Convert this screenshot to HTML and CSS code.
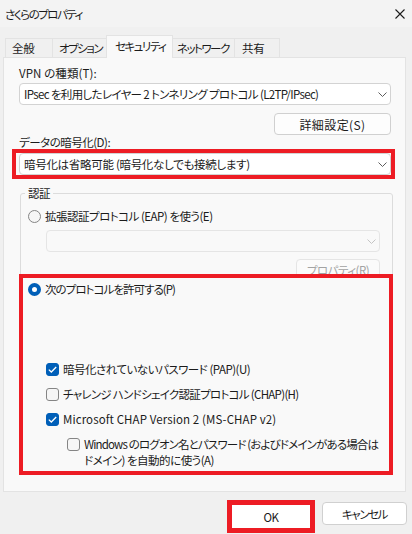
FILE: index.html
```html
<!DOCTYPE html>
<html lang="ja">
<head>
    <meta charset="UTF-8">
    <meta name="viewport" content="width=device-width, initial-scale=1.0">
    <title>さくらのプロパティ</title>
    <link rel="stylesheet" href="styles.css">
</head>
<body>

    <div class="titlebar">
        <span class="title">さくらのプロパティ</span>
        <svg class="close" width="10" height="10" viewBox="0 0 10 10">
            <path d="M0.5 0.5 L9.5 9.5 M9.5 0.5 L0.5 9.5" stroke="#1b1b1b" stroke-width="1.1" fill="none"/>
        </svg>
    </div>

    <div class="tabs">
        <div class="tab tab-general">全般</div>
        <div class="tab tab-options">オプション</div>
        <div class="tab tab-security active">セキュリティ</div>
        <div class="tab tab-network">ネットワーク</div>
        <div class="tab tab-share">共有</div>
    </div>

    <div class="panel">
        <div class="label label-vpn">VPN の種類(T):</div>
        <div class="combo">
            <span class="combo-type">IPsec を利用したレイヤー 2 トンネリング プロトコル (L2TP/IPsec)</span>
            <svg class="chev" width="9" height="5" viewBox="0 0 9 5"><polyline points="0.5,0.5 4.5,4.5 8.5,0.5" stroke="#5d5d5d" fill="none"/></svg>
        </div>
        <div class="btn-row">
            <div class="btn btn-advanced">詳細設定(S)</div>
        </div>

        <div class="label label-enc">データの暗号化(D):</div>
        <div class="mark mark-enc">
            <div class="combo">
                <span class="combo-enc">暗号化は省略可能 (暗号化なしでも接続します)</span>
                <svg class="chev" width="9" height="5" viewBox="0 0 9 5"><polyline points="0.5,0.5 4.5,4.5 8.5,0.5" stroke="#5d5d5d" fill="none"/></svg>
            </div>
        </div>

        <div class="group">
            <div class="group-title">認証</div>
            <div class="option option-eap"><span class="radio"></span>拡張認証プロトコル (EAP) を使う(E)</div>
            <div class="combo combo-disabled">
                <span></span>
                <svg class="chev" width="9" height="5" viewBox="0 0 9 5"><polyline points="0.5,0.5 4.5,4.5 8.5,0.5" stroke="#c4c4c4" fill="none"/></svg>
            </div>
            <div class="btn-row">
                <div class="btn btn-disabled">プロパティ(R)</div>
            </div>

            <div class="mark mark-auth">
                <div class="option option-allow"><span class="radio radio-on"></span>次のプロトコルを許可する(P)</div>
                <div class="checks">
                    <div class="option">
                        <span class="check check-on"><svg width="9" height="7" viewBox="0 0 9 7"><polyline points="0.8,3.6 3.3,6 8.2,1" stroke="#fff" stroke-width="1.3" fill="none"/></svg></span>
                        暗号化されていないパスワード (PAP)(U)
                    </div>
                    <div class="option option-chap">
                        <span class="check"></span>
                        チャレンジ ハンドシェイク認証プロトコル (CHAP)(H)
                    </div>
                    <div class="option option-latin">
                        <span class="check check-on"><svg width="9" height="7" viewBox="0 0 9 7"><polyline points="0.8,3.6 3.3,6 8.2,1" stroke="#fff" stroke-width="1.3" fill="none"/></svg></span>
                        Microsoft CHAP Version 2 (MS-CHAP v2)
                    </div>
                    <div class="option option-sub">
                        <span class="check"></span>
                        <span><span class="line-long">Windows のログオン名とパスワード (およびドメインがある場合は</span><br>ドメイン) を自動的に使う(A)</span>
                    </div>
                </div>
            </div>
        </div>
    </div>

    <div class="footer">
        <div class="mark mark-ok">
            <div class="btn btn-ok">OK</div>
        </div>
        <div class="btn btn-cancel">キャンセル</div>
    </div>

</body>
</html>
```

FILE: styles.css
```css
body {
    margin: 0;
    width: 412px;
    height: 534px;
    overflow: hidden;
    background-color: #f0f0f0;
    font-family: "Noto Sans CJK JP", "Noto Sans", sans-serif;
    font-size: 11.5px;
    font-feature-settings: "palt" 1;
    font-variant-east-asian: proportional-width;
    letter-spacing: -0.5px;
    white-space: nowrap;
    color: #1b1b1b;
}
.titlebar {
    height: 27px;
    background-color: #f3f3f3;
    display: flex;
    align-items: center;
    justify-content: space-between;
    padding: 0 7px 0 5px;
    line-height: 16px;
}
.title {
    letter-spacing: -1.5px;
}
.tabs {
    display: flex;
    align-items: flex-end;
    height: 22px;
    margin-top: 8px;
    padding-left: 5px;
}
.tab {
    height: 19px;
    box-sizing: border-box;
    border: 1px solid #e3e3e3;
    border-bottom: none;
    margin-right: -1px;
    padding-left: 6px;
    background-color: #f0f0f0;
    display: flex;
    align-items: center;
    letter-spacing: -1.5px;
}
.tab-general { width: 48px; letter-spacing: -0.3px; }
.tab-options { width: 55px; }
.tab-security { width: 67px; padding-left: 8px; }
.tab-network { width: 63px; padding-left: 4px; }
.tab-share { width: 46px; padding-left: 7px; letter-spacing: -0.3px; }
.tab.active {
    height: 23px;
    margin-bottom: -1px;
    padding-bottom: 2px;
    background-color: #f9f9f9;
    position: relative;
    z-index: 1;
}
.panel {
    margin-left: 3px;
    width: 403px;
    height: 435px;
    box-sizing: border-box;
    border: 1px solid #e3e3e3;
    background-color: #f9f9f9;
    padding: 7px 14px 0 15px;
}
.label {
    line-height: 16px;
}
.label-vpn {
    letter-spacing: 0.1px;
}
.label-enc {
    line-height: 14px;
}
.combo {
    margin-top: 2px;
    height: 22px;
    box-sizing: border-box;
    border: 1px solid #d3d3d3;
    border-radius: 4px;
    background-color: #fff;
    display: flex;
    align-items: center;
    justify-content: space-between;
    padding: 0 3px 0 4px;
}
.combo-type {
    letter-spacing: -0.65px;
}
.combo-enc {
    letter-spacing: -0.3px;
}
.chev {
    flex: none;
}
.btn-row {
    display: flex;
    justify-content: flex-end;
    margin-top: 8px;
}
.btn {
    height: 22px;
    box-sizing: border-box;
    border: 1px solid #d0d0d0;
    border-radius: 4px;
    background-color: #fdfdfd;
    display: flex;
    align-items: center;
    justify-content: center;
}
.btn-advanced {
    width: 117px;
    font-size: 12px;
    letter-spacing: 0.4px;
}
.mark {
    border: 4px solid #ed1c24;
}
.mark-enc {
    margin: 0 -4px 0 -7px;
    padding-left: 3px;
}
.mark-enc .combo {
    margin-top: 0;
}
.group {
    margin: 14px -2px 0 1px;
    border: 1px solid #dcdcdc;
    border-radius: 3px;
    padding: 0 12px 0 7px;
}
.group-title {
    width: max-content;
    margin: -9px 0 0 -3px;
    padding: 0 3px;
    background-color: #f9f9f9;
    line-height: 16px;
}
.option {
    display: flex;
    align-items: center;
    gap: 4px;
    line-height: 16px;
}
.option-eap {
    margin-top: 7px;
}
.option-allow {
    letter-spacing: -0.95px;
}
.option-chap {
    letter-spacing: -0.7px;
}
.option-latin {
    letter-spacing: 0.1px;
}
.line-long {
    letter-spacing: -0.85px;
}
.radio {
    flex: none;
    width: 13px;
    height: 13px;
    box-sizing: border-box;
    border: 1px solid #858585;
    border-radius: 50%;
    background-color: #f6f6f6;
}
.radio-on {
    border: 4px solid #005fb8;
    background-color: #fff;
}
.combo-disabled {
    margin: 6px 0 0 18px;
    border-color: #e5e5e5;
    background-color: #f9f9f9;
}
.group .btn-row {
    margin-top: 7px;
}
.btn-disabled {
    width: 84px;
    color: #a3a3a3;
    border-color: #e5e5e5;
    background-color: #fbfbfb;
}
.mark-auth {
    position: relative;
    margin: -7px -13px -3px -9px;
    padding: 3px 0 3px 5px;
    background-color: #f9f9f9;
}
.checks {
    margin-top: 64px;
    padding-left: 18px;
}
.checks .option + .option {
    margin-top: 9px;
}
.checks .option-sub {
    margin-top: 7px;
    padding-left: 21px;
    align-items: flex-start;
}
.check {
    flex: none;
    width: 13px;
    height: 13px;
    box-sizing: border-box;
    border: 1px solid #858585;
    border-radius: 3px;
    background-color: #f6f6f6;
    display: flex;
    align-items: center;
    justify-content: center;
}
.check-on {
    background-color: #005fb8;
    border-color: #005fb8;
}
.option-sub .check {
    margin-top: 2px;
}
.footer {
    display: flex;
    justify-content: flex-end;
    align-items: flex-start;
    gap: 7px;
    padding: 8px 5px 0 0;
}
.mark-ok {
    border-width: 5px;
}
.btn-ok {
    width: 78px;
    height: 23px;
    border: none;
    border-radius: 0;
    background-color: #fff;
}
.btn-cancel {
    width: 85px;
    height: 23px;
    margin-top: 2px;
    background-color: #fff;
    letter-spacing: -1.4px;
}
```
